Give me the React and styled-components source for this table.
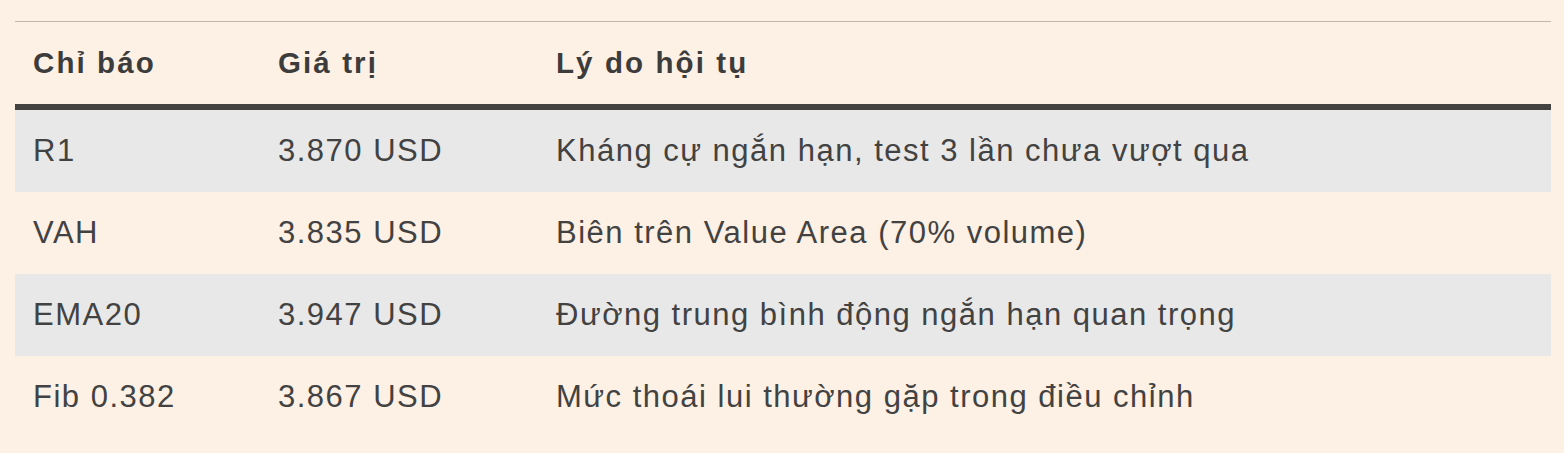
import styled, { createGlobalStyle } from 'styled-components';

const GlobalStyle = createGlobalStyle`
  html, body {
    margin: 0;
    padding: 0;
    background: #fdf0e5;
  }
  body {
    font-family: "Liberation Sans", Arial, sans-serif;
    color: #404040;
  }
`;

const Page = styled.div`
  padding: 21px 13px 15px 15px;
`;

const Table = styled.table`
  width: 100%;
  table-layout: fixed;
  border-collapse: collapse;
  border-top: 1px solid #bfb6ac;
`;

const HeadCell = styled.th`
  box-sizing: border-box;
  height: 85px;
  padding: 0 18px;
  text-align: left;
  font-size: 29.5px;
  font-weight: 700;
  letter-spacing: 2.1px;
  color: #3c3c3c;
  border-bottom: 6px solid #434240;
  width: ${(p) => p.$w || 'auto'};
`;

const Row = styled.tr`
  background: ${(p) => (p.$shade ? '#e8e8e8' : 'transparent')};
`;

const Cell = styled.td`
  height: 82px;
  padding: 0 18px;
  font-size: 31px;
  letter-spacing: 1.5px;
  color: #424242;
  white-space: nowrap;
`;

const rows = [
  ['R1', '3.870 USD', 'Kháng cự ngắn hạn, test 3 lần chưa vượt qua'],
  ['VAH', '3.835 USD', 'Biên trên Value Area (70% volume)'],
  ['EMA20', '3.947 USD', 'Đường trung bình động ngắn hạn quan trọng'],
  ['Fib 0.382', '3.867 USD', 'Mức thoái lui thường gặp trong điều chỉnh'],
];

export default function App() {
  return (
    <>
      <GlobalStyle />
      <Page>
        <Table>
          <thead>
            <tr>
              <HeadCell $w="245px">Chỉ báo</HeadCell>
              <HeadCell $w="278px">Giá trị</HeadCell>
              <HeadCell>Lý do hội tụ</HeadCell>
            </tr>
          </thead>
          <tbody>
            {rows.map((r, i) => (
              <Row key={r[0]} $shade={i % 2 === 0}>
                <Cell>{r[0]}</Cell>
                <Cell>{r[1]}</Cell>
                <Cell>{r[2]}</Cell>
              </Row>
            ))}
          </tbody>
        </Table>
      </Page>
    </>
  );
}
